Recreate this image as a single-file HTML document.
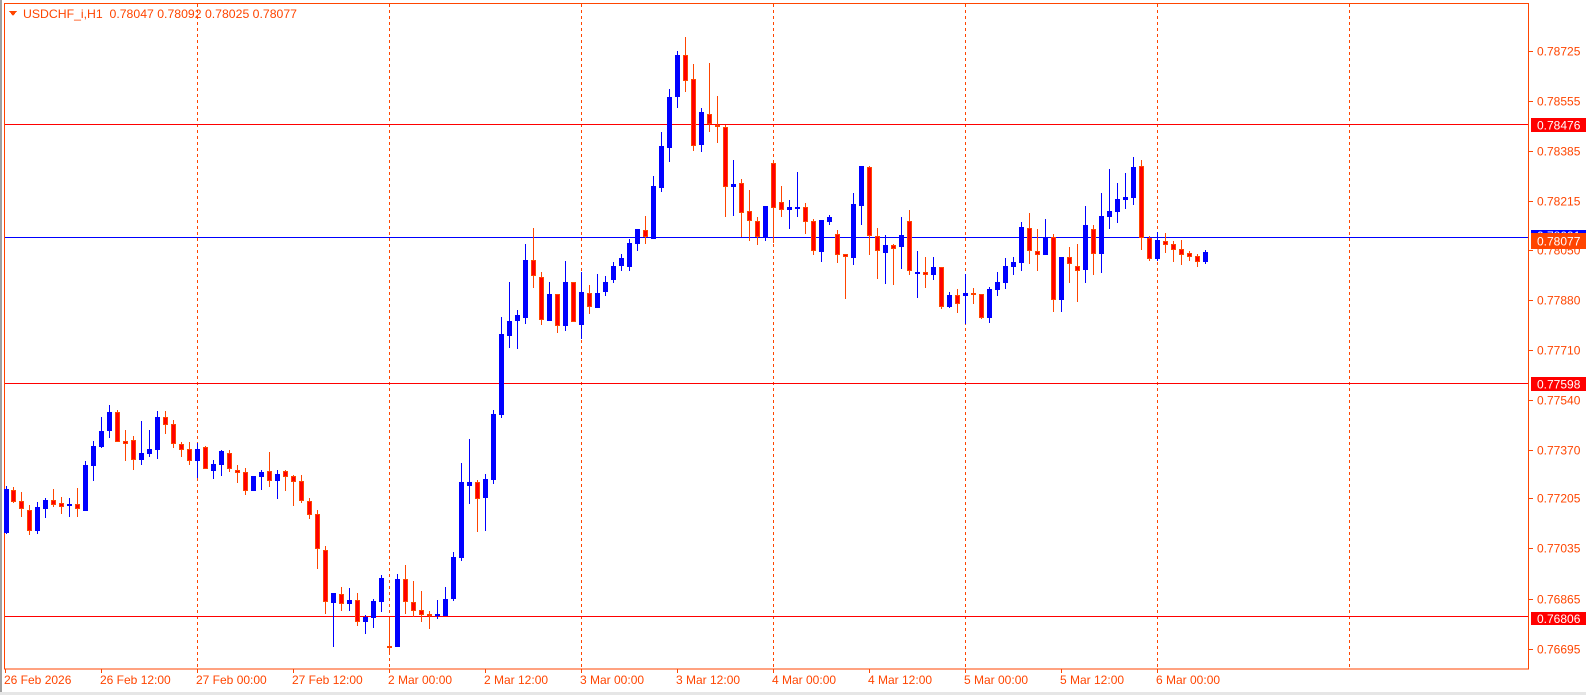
<!DOCTYPE html>
<html><head><meta charset="utf-8"><style>
html,body{margin:0;padding:0;background:#fff;width:1586px;height:695px;overflow:hidden}
svg{display:block}
text{font-family:"Liberation Sans",sans-serif;font-size:12px}
</style></head><body>
<svg width="1586" height="695" xmlns="http://www.w3.org/2000/svg" shape-rendering="crispEdges">
<rect x="0" y="0" width="2" height="695" fill="#a0a0a0"/>
<rect x="0" y="692" width="1586" height="3" fill="#e6e6e6"/>
<g stroke="#ff4500" stroke-width="1" stroke-dasharray="3,3">
<path d="M197.5 4V669M389.5 4V669M581.5 4V669M773.5 4V669M965.5 4V669M1157.5 4V669M1349.5 4V669"/>
</g>
<g stroke-width="1">
<path d="M4 124.5H1529" stroke="#ff0000"/>
<path d="M4 383.5H1529" stroke="#ff0000"/>
<path d="M4 616.5H1529" stroke="#ff0000"/>
<path d="M4 237.5H1529" stroke="#0000ff"/>
</g>
<rect x="4.5" y="3.5" width="1524" height="665.5" fill="none" stroke="#ff4500"/>
<g stroke="#ff4500"><path d="M5.5 669V673M101.5 669V673M197.5 669V673M293.5 669V673M389.5 669V673M485.5 669V673M581.5 669V673M677.5 669V673M773.5 669V673M869.5 669V673M965.5 669V673M1061.5 669V673M1157.5 669V673"/>
<path d="M1529 51.5h4M1529 101.5h4M1529 151.5h4M1529 201.5h4M1529 250.5h4M1529 300.5h4M1529 350.5h4M1529 400.5h4M1529 450.5h4M1529 498.5h4M1529 548.5h4M1529 599.5h4M1529 649.5h4"/></g>
<g fill="#0000ff">
<rect x="6" y="486" width="1" height="48"/><rect x="4" y="489" width="5" height="44"/>
<rect x="37" y="502" width="1" height="32"/><rect x="35" y="507" width="5" height="24"/>
<rect x="45" y="498" width="1" height="20"/><rect x="43" y="500" width="5" height="9"/>
<rect x="69" y="498" width="1" height="19"/><rect x="67" y="504" width="5" height="2"/>
<rect x="85" y="461" width="1" height="50"/><rect x="83" y="465" width="5" height="46"/>
<rect x="93" y="441" width="1" height="40"/><rect x="91" y="446" width="5" height="20"/>
<rect x="101" y="417" width="1" height="31"/><rect x="99" y="431" width="5" height="16"/>
<rect x="109" y="405" width="1" height="33"/><rect x="107" y="412" width="5" height="19"/>
<rect x="141" y="421" width="1" height="44"/><rect x="139" y="453" width="5" height="7"/>
<rect x="149" y="430" width="1" height="27"/><rect x="147" y="449" width="5" height="5"/>
<rect x="157" y="411" width="1" height="48"/><rect x="155" y="417" width="5" height="33"/>
<rect x="197" y="443" width="1" height="35"/><rect x="195" y="449" width="5" height="12"/>
<rect x="213" y="460" width="1" height="19"/><rect x="211" y="464" width="5" height="7"/>
<rect x="221" y="450" width="1" height="26"/><rect x="219" y="451" width="5" height="14"/>
<rect x="253" y="476" width="1" height="15"/><rect x="251" y="476" width="5" height="15"/>
<rect x="261" y="470" width="1" height="20"/><rect x="259" y="472" width="5" height="5"/>
<rect x="277" y="470" width="1" height="29"/><rect x="275" y="474" width="5" height="7"/>
<rect x="333" y="593" width="1" height="54"/><rect x="331" y="593" width="5" height="10"/>
<rect x="349" y="588" width="1" height="23"/><rect x="347" y="600" width="5" height="4"/>
<rect x="365" y="615" width="1" height="19"/><rect x="363" y="617" width="5" height="5"/>
<rect x="373" y="599" width="1" height="29"/><rect x="371" y="601" width="5" height="17"/>
<rect x="381" y="575" width="1" height="37"/><rect x="379" y="578" width="5" height="24"/>
<rect x="397" y="574" width="1" height="73"/><rect x="395" y="579" width="5" height="68"/>
<rect x="437" y="600" width="1" height="19"/><rect x="435" y="614" width="5" height="2"/>
<rect x="445" y="587" width="1" height="29"/><rect x="443" y="599" width="5" height="17"/>
<rect x="453" y="552" width="1" height="49"/><rect x="451" y="557" width="5" height="42"/>
<rect x="461" y="463" width="1" height="98"/><rect x="459" y="482" width="5" height="76"/>
<rect x="469" y="439" width="1" height="65"/><rect x="467" y="482" width="5" height="4"/>
<rect x="485" y="474" width="1" height="57"/><rect x="483" y="479" width="5" height="19"/>
<rect x="493" y="410" width="1" height="74"/><rect x="491" y="414" width="5" height="66"/>
<rect x="501" y="317" width="1" height="101"/><rect x="499" y="334" width="5" height="81"/>
<rect x="509" y="282" width="1" height="66"/><rect x="507" y="321" width="5" height="15"/>
<rect x="517" y="310" width="1" height="39"/><rect x="515" y="315" width="5" height="6"/>
<rect x="525" y="244" width="1" height="80"/><rect x="523" y="260" width="5" height="58"/>
<rect x="549" y="282" width="1" height="39"/><rect x="547" y="294" width="5" height="27"/>
<rect x="565" y="261" width="1" height="70"/><rect x="563" y="282" width="5" height="44"/>
<rect x="581" y="272" width="1" height="67"/><rect x="579" y="292" width="5" height="33"/>
<rect x="597" y="274" width="1" height="34"/><rect x="595" y="293" width="5" height="15"/>
<rect x="605" y="276" width="1" height="20"/><rect x="603" y="282" width="5" height="10"/>
<rect x="613" y="262" width="1" height="21"/><rect x="611" y="266" width="5" height="14"/>
<rect x="621" y="254" width="1" height="17"/><rect x="619" y="258" width="5" height="8"/>
<rect x="629" y="239" width="1" height="32"/><rect x="627" y="243" width="5" height="24"/>
<rect x="637" y="229" width="1" height="22"/><rect x="635" y="229" width="5" height="15"/>
<rect x="653" y="176" width="1" height="63"/><rect x="651" y="186" width="5" height="53"/>
<rect x="661" y="132" width="1" height="60"/><rect x="659" y="146" width="5" height="42"/>
<rect x="669" y="89" width="1" height="73"/><rect x="667" y="97" width="5" height="51"/>
<rect x="677" y="51" width="1" height="57"/><rect x="675" y="55" width="5" height="42"/>
<rect x="701" y="108" width="1" height="44"/><rect x="699" y="112" width="5" height="33"/>
<rect x="733" y="160" width="1" height="56"/><rect x="731" y="184" width="5" height="3"/>
<rect x="765" y="206" width="1" height="35"/><rect x="763" y="206" width="5" height="31"/>
<rect x="789" y="200" width="1" height="29"/><rect x="787" y="207" width="5" height="3"/>
<rect x="797" y="172" width="1" height="45"/><rect x="795" y="207" width="5" height="2"/>
<rect x="821" y="220" width="1" height="42"/><rect x="819" y="220" width="5" height="32"/>
<rect x="829" y="215" width="1" height="10"/><rect x="827" y="217" width="5" height="5"/>
<rect x="853" y="193" width="1" height="72"/><rect x="851" y="204" width="5" height="54"/>
<rect x="861" y="166" width="1" height="59"/><rect x="859" y="166" width="5" height="40"/>
<rect x="885" y="235" width="1" height="49"/><rect x="883" y="245" width="5" height="8"/>
<rect x="901" y="217" width="1" height="52"/><rect x="899" y="235" width="5" height="12"/>
<rect x="917" y="251" width="1" height="47"/><rect x="915" y="272" width="5" height="2"/>
<rect x="933" y="257" width="1" height="23"/><rect x="931" y="267" width="5" height="8"/>
<rect x="949" y="292" width="1" height="16"/><rect x="947" y="295" width="5" height="12"/>
<rect x="965" y="274" width="1" height="50"/><rect x="963" y="293" width="5" height="3"/>
<rect x="989" y="287" width="1" height="36"/><rect x="987" y="289" width="5" height="29"/>
<rect x="997" y="272" width="1" height="24"/><rect x="995" y="282" width="5" height="8"/>
<rect x="1005" y="258" width="1" height="31"/><rect x="1003" y="266" width="5" height="17"/>
<rect x="1013" y="257" width="1" height="18"/><rect x="1011" y="262" width="5" height="5"/>
<rect x="1021" y="222" width="1" height="49"/><rect x="1019" y="227" width="5" height="36"/>
<rect x="1045" y="219" width="1" height="36"/><rect x="1043" y="237" width="5" height="18"/>
<rect x="1061" y="257" width="1" height="55"/><rect x="1059" y="257" width="5" height="43"/>
<rect x="1085" y="206" width="1" height="77"/><rect x="1083" y="225" width="5" height="45"/>
<rect x="1101" y="193" width="1" height="80"/><rect x="1099" y="216" width="5" height="38"/>
<rect x="1109" y="169" width="1" height="60"/><rect x="1107" y="211" width="5" height="6"/>
<rect x="1117" y="183" width="1" height="40"/><rect x="1115" y="199" width="5" height="13"/>
<rect x="1125" y="173" width="1" height="36"/><rect x="1123" y="197" width="5" height="3"/>
<rect x="1133" y="157" width="1" height="48"/><rect x="1131" y="167" width="5" height="31"/>
<rect x="1157" y="232" width="1" height="29"/><rect x="1155" y="240" width="5" height="19"/>
<rect x="1205" y="250" width="1" height="14"/><rect x="1203" y="252" width="5" height="10"/>
</g>
<g fill="#ff4500">
<rect x="13" y="487" width="1" height="16"/><rect x="21" y="492" width="1" height="25"/><rect x="29" y="505" width="1" height="30"/>
<rect x="53" y="489" width="1" height="18"/><rect x="61" y="497" width="1" height="17"/><rect x="77" y="488" width="1" height="29"/>
<rect x="117" y="410" width="1" height="32"/><rect x="125" y="430" width="1" height="31"/><rect x="133" y="436" width="1" height="34"/>
<rect x="165" y="411" width="1" height="23"/><rect x="173" y="420" width="1" height="28"/><rect x="181" y="442" width="1" height="15"/>
<rect x="189" y="442" width="1" height="23"/><rect x="205" y="446" width="1" height="23"/><rect x="229" y="450" width="1" height="22"/>
<rect x="237" y="465" width="1" height="18"/><rect x="245" y="468" width="1" height="27"/><rect x="269" y="452" width="1" height="35"/>
<rect x="285" y="470" width="1" height="21"/><rect x="293" y="475" width="1" height="31"/><rect x="301" y="475" width="1" height="28"/>
<rect x="309" y="498" width="1" height="21"/><rect x="317" y="510" width="1" height="59"/><rect x="325" y="546" width="1" height="68"/>
<rect x="341" y="587" width="1" height="24"/><rect x="357" y="593" width="1" height="33"/><rect x="389" y="617" width="1" height="35"/>
<rect x="405" y="565" width="1" height="49"/><rect x="413" y="581" width="1" height="36"/><rect x="421" y="591" width="1" height="31"/>
<rect x="429" y="611" width="1" height="18"/><rect x="477" y="480" width="1" height="52"/><rect x="533" y="228" width="1" height="60"/>
<rect x="541" y="272" width="1" height="53"/><rect x="557" y="294" width="1" height="39"/><rect x="573" y="282" width="1" height="40"/>
<rect x="589" y="285" width="1" height="29"/><rect x="645" y="216" width="1" height="28"/><rect x="685" y="37" width="1" height="55"/>
<rect x="693" y="64" width="1" height="87"/><rect x="709" y="63" width="1" height="69"/><rect x="717" y="96" width="1" height="47"/>
<rect x="725" y="125" width="1" height="92"/><rect x="741" y="179" width="1" height="58"/><rect x="749" y="190" width="1" height="51"/>
<rect x="757" y="217" width="1" height="28"/><rect x="773" y="163" width="1" height="80"/><rect x="781" y="186" width="1" height="31"/>
<rect x="805" y="203" width="1" height="31"/><rect x="813" y="219" width="1" height="36"/><rect x="837" y="230" width="1" height="33"/>
<rect x="845" y="254" width="1" height="45"/><rect x="869" y="166" width="1" height="89"/><rect x="877" y="228" width="1" height="51"/>
<rect x="893" y="244" width="1" height="41"/><rect x="909" y="210" width="1" height="65"/><rect x="925" y="257" width="1" height="31"/>
<rect x="941" y="267" width="1" height="42"/><rect x="957" y="289" width="1" height="24"/><rect x="973" y="288" width="1" height="16"/>
<rect x="981" y="294" width="1" height="25"/><rect x="1029" y="213" width="1" height="51"/><rect x="1037" y="229" width="1" height="42"/>
<rect x="1053" y="234" width="1" height="78"/><rect x="1069" y="247" width="1" height="36"/><rect x="1077" y="244" width="1" height="58"/>
<rect x="1093" y="225" width="1" height="50"/><rect x="1141" y="160" width="1" height="90"/><rect x="1149" y="236" width="1" height="25"/>
<rect x="1165" y="233" width="1" height="20"/><rect x="1173" y="241" width="1" height="21"/><rect x="1181" y="240" width="1" height="25"/>
<rect x="1189" y="251" width="1" height="10"/><rect x="1197" y="254" width="1" height="13"/>
</g>
<g fill="#ff0000" stroke="#ff4500" stroke-width="1">
<rect x="11.5" y="490.5" width="4" height="11"/><rect x="19.5" y="501.5" width="4" height="7"/><rect x="27.5" y="510.5" width="4" height="20"/>
<rect x="51.5" y="500.5" width="4" height="4"/><rect x="59.5" y="503.5" width="4" height="3"/><rect x="75.5" y="504.5" width="4" height="4"/>
<rect x="115.5" y="412.5" width="4" height="29"/><rect x="123.5" y="441.5" width="4" height="2"/><rect x="131.5" y="440.5" width="4" height="19"/>
<rect x="163.5" y="417.5" width="4" height="7"/><rect x="171.5" y="424.5" width="4" height="19"/><rect x="179.5" y="444.5" width="4" height="5"/>
<rect x="187.5" y="449.5" width="4" height="11"/><rect x="203.5" y="447.5" width="4" height="21"/><rect x="227.5" y="453.5" width="4" height="15"/>
<rect x="235.5" y="470.5" width="4" height="2"/><rect x="243.5" y="472.5" width="4" height="18"/><rect x="267.5" y="471.5" width="4" height="9"/>
<rect x="283.5" y="471.5" width="4" height="5"/><rect x="291.5" y="476.5" width="4" height="5"/><rect x="299.5" y="481.5" width="4" height="19"/>
<rect x="307.5" y="501.5" width="4" height="13"/><rect x="315.5" y="514.5" width="4" height="34"/><rect x="323.5" y="550.5" width="4" height="51"/>
<rect x="339.5" y="594.5" width="4" height="9"/><rect x="355.5" y="600.5" width="4" height="21"/><rect x="387.5" y="646.5" width="4" height="1"/>
<rect x="403.5" y="579.5" width="4" height="22"/><rect x="411.5" y="602.5" width="4" height="8"/><rect x="419.5" y="610.5" width="4" height="4"/>
<rect x="427.5" y="614.5" width="4" height="1"/><rect x="475.5" y="482.5" width="4" height="16"/><rect x="531.5" y="260.5" width="4" height="15"/>
<rect x="539.5" y="277.5" width="4" height="42"/><rect x="555.5" y="294.5" width="4" height="31"/><rect x="571.5" y="282.5" width="4" height="39"/>
<rect x="587.5" y="293.5" width="4" height="13"/><rect x="643.5" y="230.5" width="4" height="6"/><rect x="683.5" y="55.5" width="4" height="25"/>
<rect x="691.5" y="79.5" width="4" height="66"/><rect x="707.5" y="114.5" width="4" height="9"/><rect x="715.5" y="125.5" width="4" height="1"/>
<rect x="723.5" y="127.5" width="4" height="59"/><rect x="739.5" y="183.5" width="4" height="29"/><rect x="747.5" y="211.5" width="4" height="9"/>
<rect x="755.5" y="221.5" width="4" height="15"/><rect x="771.5" y="163.5" width="4" height="44"/><rect x="779.5" y="202.5" width="4" height="7"/>
<rect x="803.5" y="207.5" width="4" height="14"/><rect x="811.5" y="221.5" width="4" height="29"/><rect x="835.5" y="234.5" width="4" height="20"/>
<rect x="843.5" y="254.5" width="4" height="2"/><rect x="867.5" y="167.5" width="4" height="68"/><rect x="875.5" y="236.5" width="4" height="14"/>
<rect x="891.5" y="245.5" width="4" height="3"/><rect x="907.5" y="221.5" width="4" height="49"/><rect x="923.5" y="272.5" width="4" height="2"/>
<rect x="939.5" y="267.5" width="4" height="39"/><rect x="955.5" y="295.5" width="4" height="8"/><rect x="971.5" y="293.5" width="4" height="1"/>
<rect x="979.5" y="294.5" width="4" height="23"/><rect x="1027.5" y="228.5" width="4" height="22"/><rect x="1035.5" y="251.5" width="4" height="3"/>
<rect x="1051.5" y="237.5" width="4" height="62"/><rect x="1067.5" y="257.5" width="4" height="6"/><rect x="1075.5" y="266.5" width="4" height="4"/>
<rect x="1091.5" y="229.5" width="4" height="24"/><rect x="1139.5" y="166.5" width="4" height="71"/><rect x="1147.5" y="238.5" width="4" height="20"/>
<rect x="1163.5" y="241.5" width="4" height="3"/><rect x="1171.5" y="244.5" width="4" height="5"/><rect x="1179.5" y="249.5" width="4" height="5"/>
<rect x="1187.5" y="253.5" width="4" height="3"/><rect x="1195.5" y="256.5" width="4" height="5"/>
</g>
<path d="M9 11h8l-4 5z" fill="#ff4500"/>
<text x="23" y="18" fill="#ff4500" textLength="274" lengthAdjust="spacingAndGlyphs">USDCHF_i,H1&#160;&#160;0.78047 0.78092 0.78025 0.78077</text>
<g fill="#ff4500">
<text x="1537" y="55.5">0.78725</text>
<text x="1537" y="105.5">0.78555</text>
<text x="1537" y="155.5">0.78385</text>
<text x="1537" y="205.5">0.78215</text>
<text x="1537" y="254.5">0.78050</text>
<text x="1537" y="304.5">0.77880</text>
<text x="1537" y="354.5">0.77710</text>
<text x="1537" y="404.5">0.77540</text>
<text x="1537" y="454.5">0.77370</text>
<text x="1537" y="502.5">0.77205</text>
<text x="1537" y="552.5">0.77035</text>
<text x="1537" y="603.5">0.76865</text>
<text x="1537" y="653.5">0.76695</text>
</g>
<rect x="1531" y="118" width="55" height="14" fill="#ff0000"/>
<text x="1537" y="129.5" fill="#fff">0.78476</text>
<rect x="1531" y="377" width="55" height="14" fill="#ff0000"/>
<text x="1537" y="388.5" fill="#fff">0.77598</text>
<rect x="1531" y="612" width="55" height="13" fill="#ff0000"/>
<text x="1537" y="623" fill="#fff">0.76806</text>
<rect x="1531" y="230" width="55" height="12" fill="#0000ff"/>
<text x="1537" y="240" fill="#fff">0.78091</text>
<rect x="1531" y="233" width="55" height="16" fill="#ff4500"/>
<text x="1537" y="245.5" fill="#fff">0.78077</text>
<g fill="#ff4500">
<text x="4" y="684">26 Feb 2026</text>
<text x="100" y="684">26 Feb 12:00</text>
<text x="196" y="684">27 Feb 00:00</text>
<text x="292" y="684">27 Feb 12:00</text>
<text x="388" y="684">2 Mar 00:00</text>
<text x="484" y="684">2 Mar 12:00</text>
<text x="580" y="684">3 Mar 00:00</text>
<text x="676" y="684">3 Mar 12:00</text>
<text x="772" y="684">4 Mar 00:00</text>
<text x="868" y="684">4 Mar 12:00</text>
<text x="964" y="684">5 Mar 00:00</text>
<text x="1060" y="684">5 Mar 12:00</text>
<text x="1156" y="684">6 Mar 00:00</text>
</g>
</svg>
</body></html>
